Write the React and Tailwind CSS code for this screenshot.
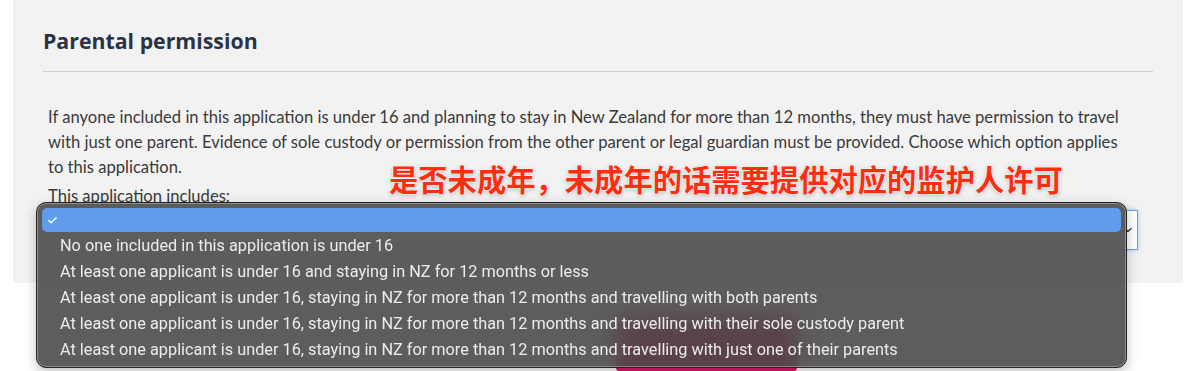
import { Check, ChevronDown } from 'lucide-react';

const options = [
  'No one included in this application is under 16',
  'At least one applicant is under 16 and staying in NZ for 12 months or less',
  'At least one applicant is under 16, staying in NZ for more than 12 months and travelling with both parents',
  'At least one applicant is under 16, staying in NZ for more than 12 months and travelling with their sole custody parent',
  'At least one applicant is under 16, staying in NZ for more than 12 months and travelling with just one of their parents',
];

const App = () => {
  return (
    <div className="relative w-[1189px] h-[371px] bg-white overflow-hidden font-['Lato',sans-serif]">
      {/* form panel */}
      <section className="ml-[13px] w-[1170px] h-[283px] bg-[#f2f2f2] px-[30px] pt-[27px]">
        <h2 className="font-['Open_Sans',sans-serif] text-[21.3px] leading-[28px] font-bold text-[#2b3245]">
          Parental permission
        </h2>
        <div className="mt-[16px] h-px bg-[#cfcfcf]" />
        <div className="pl-[5px] mt-[33px] text-[16.6px] leading-[25px] text-[#3a3a3a]">
          <p className="whitespace-nowrap">
            If anyone included in this application is under 16 and planning to stay in New Zealand for more than 12 months, they must have permission to travel
            <br />
            with just one parent. Evidence of sole custody or permission from the other parent or legal guardian must be provided. Choose which option applies
            <br />
            to this application.
          </p>
          <label className="block mt-[4px]">This application includes:</label>
          <div className="mt-[1px] w-[1090px] h-[40px] bg-white border border-[#6aa0e2] shadow-[0_0_4px_rgba(90,150,230,0.5)] flex items-center justify-end pr-[3px]">
            <ChevronDown className="w-[12px] h-[12px] text-[#333]" strokeWidth={2.5} />
          </div>
        </div>
      </section>

      {/* buttons behind the open menu */}
      <div className="flex pl-[616px] mt-[35px]">
        <button className="w-[181px] h-[53px] bg-[#e0186a] rounded-[3px]" />
      </div>

      {/* annotation */}
      <div className="absolute left-[389px] top-[160px] text-[29.3px] leading-[36px] font-bold text-[#ff2d10] font-['Noto_Sans_CJK_SC',sans-serif] [text-shadow:0_0_2px_#fff,0_0_3px_#fff,0_1px_4px_rgba(0,0,0,0.35)]">
        是否未成年，未成年的话需要提供对应的监护人许可
      </div>

      {/* native select menu */}
      <div className="absolute left-[36px] top-[202px] w-[1091px] h-[166px] rounded-[10px] border border-[#262626] bg-[#474747]/88 backdrop-blur-md shadow-[inset_0_0_0_1px_rgba(255,255,255,0.3),0_4px_12px_rgba(0,0,0,0.25)] px-[5px] pt-[4px] font-['Roboto',sans-serif]">
        <div className="h-[26px] py-px">
          <div className="h-[24px] rounded-[5px] bg-[#5f9cec] flex items-center pl-[5px]">
            <Check className="w-[11px] h-[11px] text-white" strokeWidth={3} />
          </div>
        </div>
        {options.map((o) => (
          <div key={o} className="h-[26px] flex items-center pl-[18px] text-[16.3px] text-[#ececec] whitespace-nowrap">
            {o}
          </div>
        ))}
      </div>
    </div>
  );
};

export default App;
